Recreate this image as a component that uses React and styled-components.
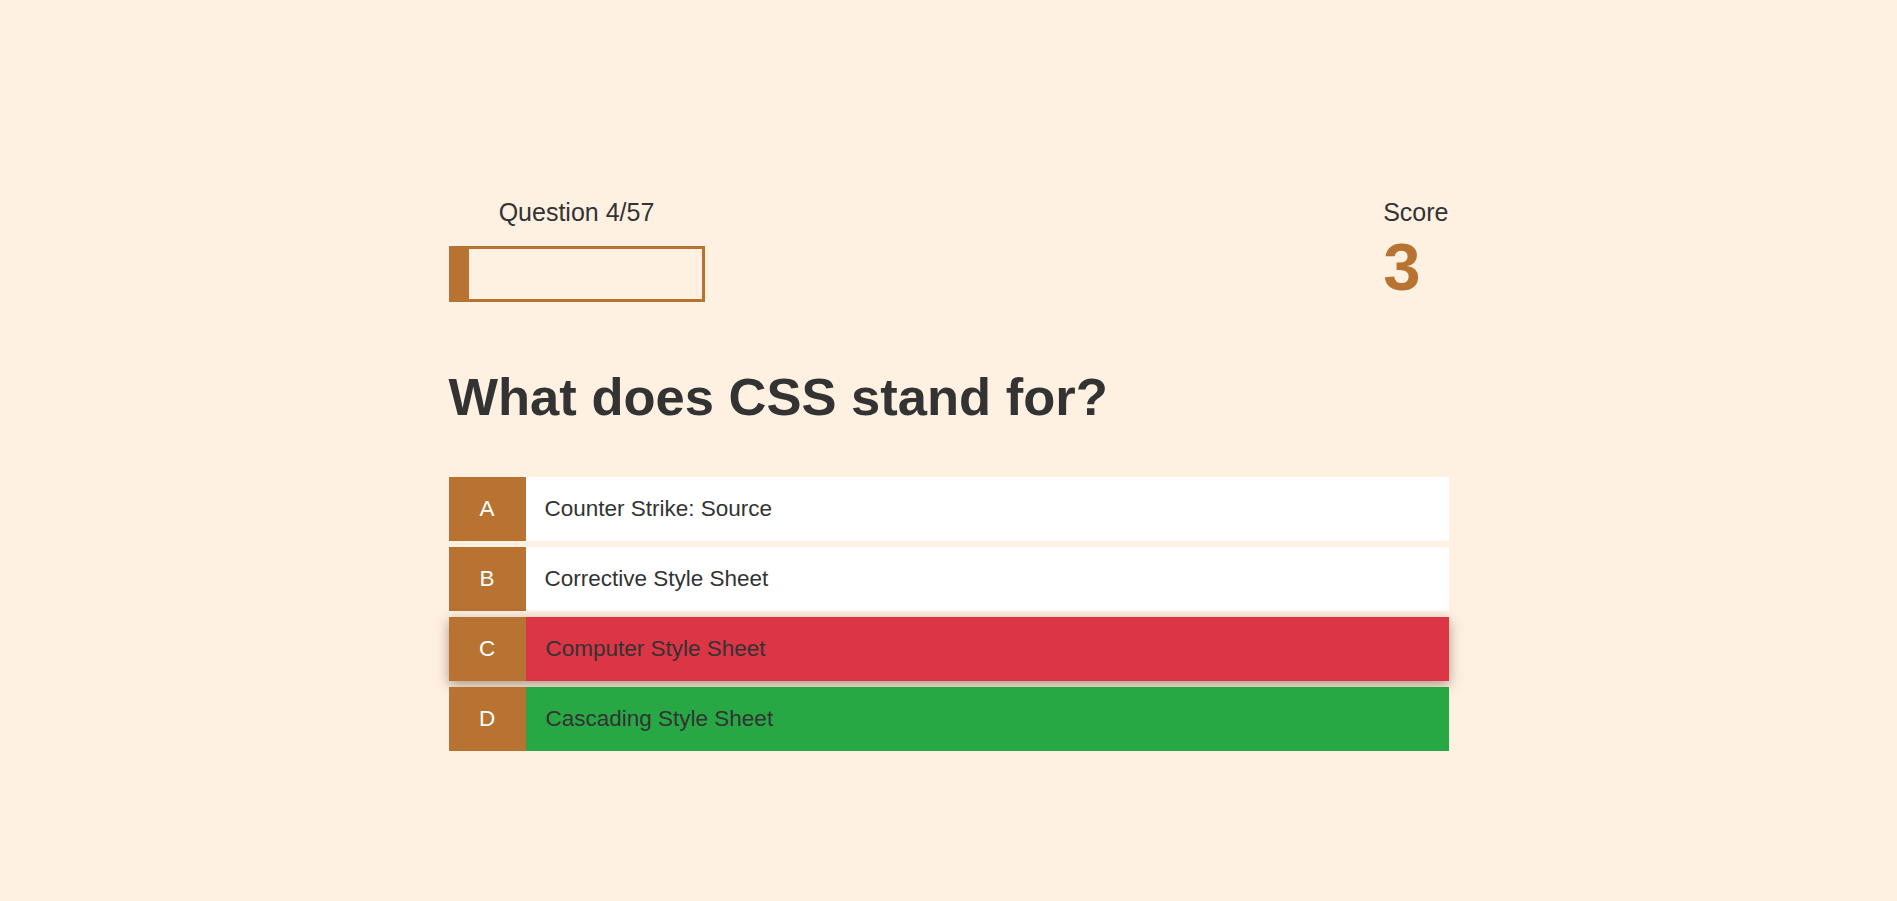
import React from "react";
import styled, { createGlobalStyle } from "styled-components";

const GlobalStyle = createGlobalStyle`
  html, body {
    margin: 0;
    padding: 0;
    background: #fff1e2;
    min-height: 100%;
  }
  body {
    font-family: "Liberation Sans", Arial, sans-serif;
    color: #333333;
  }
`;

const Page = styled.div`
  min-height: 100vh;
  box-sizing: border-box;
  padding-top: 198px;
  display: flex;
  justify-content: center;
`;

const Container = styled.div`
  width: 1000px;
  display: flex;
  flex-direction: column;
`;

const Hud = styled.div`
  display: flex;
  justify-content: space-between;
  align-items: flex-start;
`;

const HudItem = styled.div`
  display: flex;
  flex-direction: column;
  align-items: ${(p) => (p.$center ? "center" : "flex-start")};
  width: ${(p) => (p.$width ? p.$width : "auto")};
`;

const HudPrefix = styled.p`
  margin: 0;
  font-size: 25px;
  line-height: 28px;
  color: #333333;
  text-align: center;
`;

const HudMain = styled.h1`
  margin: 7px 0 0;
  font-size: 67px;
  line-height: 67px;
  font-weight: 700;
  color: #b87333;
`;

const ProgressBar = styled.div`
  margin-top: 20px;
  width: 256px;
  height: 56px;
  box-sizing: border-box;
  border: 3px solid #b87333;
  display: flex;
`;

const ProgressFill = styled.div`
  height: 100%;
  background: #b87333;
`;

const Question = styled.h2`
  margin: 64px 0 0;
  font-size: 52.5px;
  line-height: 61px;
  font-weight: 700;
  color: #333333;
`;

const Choices = styled.div`
  margin-top: 50px;
  display: flex;
  flex-direction: column;
  gap: 6px;
`;

const bgFor = (state) =>
  state === "wrong" ? "#dc3545" : state === "right" ? "#28a745" : "#ffffff";

const Choice = styled.div`
  display: flex;
  height: 64px;
  font-size: 22.5px;
  background: ${(p) => bgFor(p.$state)};
  box-shadow: ${(p) =>
    p.$hover ? "0 4px 12px 0 rgba(70, 45, 20, 0.45)" : "none"};
  cursor: pointer;
`;

const ChoicePrefix = styled.div`
  width: 77px;
  flex-shrink: 0;
  display: flex;
  align-items: center;
  justify-content: center;
  background: #b87333;
  color: #ffffff;
  line-height: 26px;
`;

const ChoiceText = styled.div`
  flex: 1;
  display: flex;
  align-items: center;
  padding: 0 19px 0 ${(p) => (p.$shift ? "20px" : "19px")};
  color: #333333;
  line-height: 26px;
`;

const choices = [
  { letter: "A", text: "Counter Strike: Source" },
  { letter: "B", text: "Corrective Style Sheet" },
  { letter: "C", text: "Computer Style Sheet", state: "wrong", hover: true },
  { letter: "D", text: "Cascading Style Sheet", state: "right" },
];

export default function App() {
  const current = 4;
  const total = 57;
  return (
    <>
      <GlobalStyle />
      <Page>
        <Container>
          <Hud>
            <HudItem $center $width="256px">
              <HudPrefix>
                Question {current}/{total}
              </HudPrefix>
              <ProgressBar>
                <ProgressFill style={{ width: `${(current / total) * 100}%` }} />
              </ProgressBar>
            </HudItem>
            <HudItem>
              <HudPrefix>Score</HudPrefix>
              <HudMain>3</HudMain>
            </HudItem>
          </Hud>
          <Question>What does CSS stand for?</Question>
          <Choices>
            {choices.map((c) => (
              <Choice key={c.letter} $state={c.state} $hover={c.hover}>
                <ChoicePrefix>{c.letter}</ChoicePrefix>
                <ChoiceText $shift={!!c.state}>{c.text}</ChoiceText>
              </Choice>
            ))}
          </Choices>
        </Container>
      </Page>
    </>
  );
}
